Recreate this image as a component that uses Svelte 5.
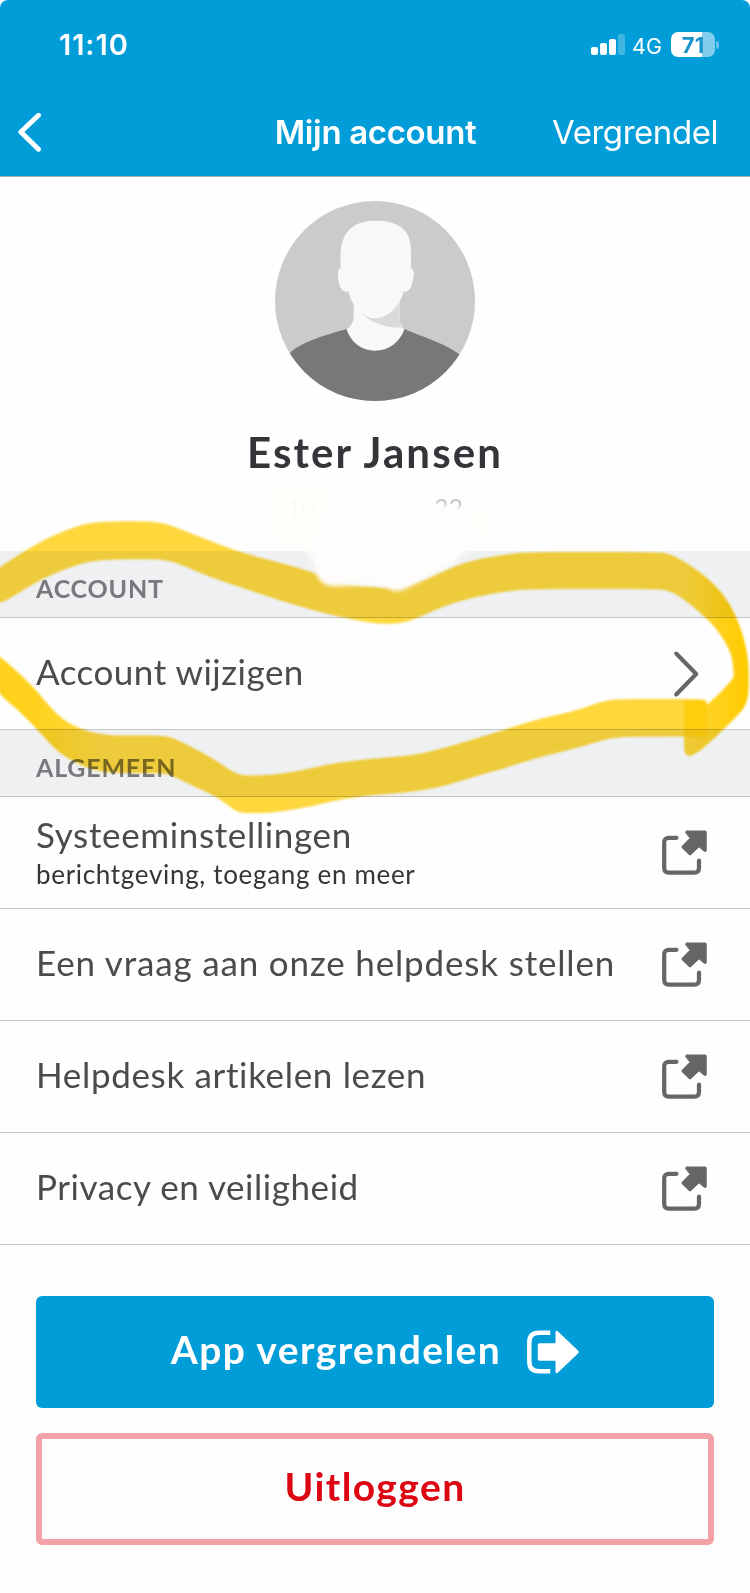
<script lang="ts">
  type Point = [number, number];

  interface Item {
    title: string;
    subtitle?: string;
    tracking: number;
  }

  const general: Item[] = [
    { title: 'Systeeminstellingen', subtitle: 'berichtgeving, toegang en meer', tracking: 0.65 },
    { title: 'Een vraag aan onze helpdesk stellen', tracking: 0.83 },
    { title: 'Helpdesk artikelen lezen', tracking: 0.66 },
    { title: 'Privacy en veiligheid', tracking: 0.55 }
  ];

  const signal = [
    { height: 8, on: true },
    { height: 12, on: true },
    { height: 16, on: true },
    { height: 21, on: false }
  ];

  const battery = 71;

  // Upper marker stroke, from the left edge over the top and round the right
  const upperStroke: Point[] = [
    [-6, 571], [12, 559], [33, 546], [54, 535], [77, 526], [93, 522.5], [110, 521.5], [135, 521],
    [160, 522], [178, 528], [200, 537], [240, 552.5], [283, 563.5], [313, 572], [340, 583],
    [375, 587], [395, 588], [415, 583], [436, 574], [458, 565], [475, 560], [492, 556.5],
    [510, 554], [530, 552], [590, 552], [658, 552], [670, 554], [682, 560], [700, 572],
    [715, 585], [725, 597], [733, 610], [740, 626], [745, 643], [748, 658], [749, 675],
    [748.5, 695], [746, 704], [741, 712], [725, 728], [708, 744], [697, 753], [689, 757],
    [684, 753], [684, 740], [684, 724], [692, 716], [708, 704], [720, 693], [733, 679],
    [734, 674], [732, 657], [728, 647], [722, 637], [715, 627], [706, 618], [690, 604],
    [676, 594], [667, 590.5], [658, 589], [600, 589], [532, 589], [508, 591], [485, 595],
    [463, 600], [442, 607], [424, 615], [408, 622], [392, 624], [375, 623.5], [350, 619],
    [323, 613], [283, 601.5], [240, 587], [207, 576], [180, 564], [163, 559.5], [140, 559],
    [110, 559.5], [93, 561], [80, 564], [60, 571], [40, 580], [20, 592], [-6, 608]
  ];

  const lowerStroke: Point[] = [
    [-6, 652], [4, 660], [20, 674], [37, 691], [50, 707], [60, 717], [72, 725], [87, 731],
    [100, 734], [113, 735.5], [138, 735.5], [160, 735.5], [170, 737], [180, 741], [197, 750],
    [213, 758.5], [227, 768], [236, 773.5], [244, 775.5], [262, 775.5], [280, 774], [304, 770],
    [327, 764.5], [350, 761], [375, 758.5], [405, 756], [425, 753], [458, 744], [492, 733.5],
    [538, 719], [575, 711], [600, 702], [615, 699], [660, 699], [700, 699], [705, 700.5],
    [707, 707], [707, 722], [706, 736], [695, 736.5], [660, 736.5], [615, 737], [597, 742],
    [575, 748.5], [538, 757.5], [505, 768], [475, 776.5], [448, 785], [425, 790], [400, 793],
    [375, 795], [352, 797.5], [333, 801], [313, 806], [293, 809.5], [278, 812], [263, 813],
    [242, 813], [234, 810], [225, 803], [213, 795], [193, 786], [173, 776], [165, 773.5],
    [147, 773], [113, 773], [98, 771], [85, 767], [67, 758], [55, 749], [44, 737], [34, 726],
    [17, 709], [-6, 690]
  ];

  // Closed curve through the middle of every pair of points
  function smooth(points: Point[]) {
    const mid = (a: Point, b: Point) => `${(a[0] + b[0]) / 2} ${(a[1] + b[1]) / 2}`;
    const last = points[points.length - 1];
    let d = `M${mid(last, points[0])}`;
    points.forEach((p, i) => {
      d += `Q${p[0]} ${p[1]} ${mid(p, points[(i + 1) % points.length])}`;
    });
    return d + 'Z';
  }
</script>

<div class="screen">
  <header>
    <div class="status">
      <span class="clock">11:10</span>
      <div class="indicators">
        <div class="signal">
          {#each signal as bar}
            <i class:off={!bar.on} style="height: {bar.height}px"></i>
          {/each}
        </div>
        <span class="network">4G</span>
        <div class="battery">
          <div class="level" style="--level: {battery}%">{battery}</div>
          <div class="tip"></div>
        </div>
      </div>
    </div>
    <nav>
      <button class="back" aria-label="Terug">
        <svg width="28" height="42" viewBox="0 0 28 42">
          <path d="M22.5 4.3 4.8 21l17.7 17.2" />
        </svg>
      </button>
      <h1>Mijn account</h1>
      <button class="lock">Vergrendel</button>
    </nav>
  </header>

  <section class="profile">
    <svg class="avatar" width="200" height="200" viewBox="0 0 200 200">
      <clipPath id="round"><circle cx="100" cy="100" r="100" /></clipPath>
      <g clip-path="url(#round)">
        <rect width="200" height="200" fill="#cbcbcb" />
        <path d="M78.7 98V117Q78 124 71.7 128V160H129V128Q124.7 124 124.7 117V98Z" fill="#f7f8fa" />
        <path d="M83 108Q97 126.7 127 126.7Q124.7 123 124.7 117V98Z" fill="#dadada" />
        <path
          d="M0 165Q10 153 15 152C24 142 50 134 71.5 128C76 142 87 149.7 100 149.7C114 149.7 125 141 129.5 128C148 136 171 143 184 153L200 170V200H0Z"
          fill="#7a7778"
        />
        <path
          d="M100 19.7C80 19.7 65.5 29 65.5 56V67C62 68 63 74 63.5 79C64.5 86 67 92 73.5 90.5C76 104 88 117.3 100 117.3C113 117.3 126 104 128.5 90.5C134 92 136.5 86 138 79C139.5 72 139 68 136 67V50C136 27 122 19.7 100 19.7Z"
          fill="#f7f8fa"
        />
      </g>
    </svg>
    <h2>Ester Jansen</h2>
    <p class="birthday"><span>10</span><span class="year">22</span></p>
  </section>

  <h3>ACCOUNT</h3>
  <div class="row">
    <div class="label"><span class="title account">Account wijzigen</span></div>
    <svg class="chevron" width="26" height="46" viewBox="0 0 26 46">
      <path d="M3.2 2.5 23.2 23 3.2 43.5" />
    </svg>
  </div>

  <h3>ALGEMEEN</h3>
  {#each general as item}
    <div class="row">
      <div class="label" class:double={item.subtitle}>
        <span class="title" style="letter-spacing: {item.tracking}px">{item.title}</span>
        {#if item.subtitle}
          <span class="subtitle">{item.subtitle}</span>
        {/if}
      </div>
      <svg class="external" width="45" height="45" viewBox="0 0 45 45">
        <path
          class="box"
          d="M14.5 7.8H7Q2.2 7.8 2.2 12.5V37.8Q2.2 42.7 7 42.7H32.2Q37 42.7 37 37.8V30.5"
        />
        <path class="arrow" d="M25 2.2H43V20.3L37 15 28 23.5 21.3 17 30 8.3Z" />
      </svg>
    </div>
  {/each}

  <div class="actions">
    <button class="primary">
      <span>App vergrendelen</span>
      <svg width="52" height="44" viewBox="0 0 52 44">
        <path d="M21 2.8H12Q2.3 2.8 2.3 12.5V31.5Q2.3 41.2 12 41.2H21" class="bracket" />
        <path
          d="M28.5 2.5Q28.5 -.5 31 1.5L51 20.5Q52.5 22 51 23.5L31 42.5Q28.5 44.5 28.5 41.5V30.7H12.5Q10.7 30.7 10.7 29V15Q10.7 13.3 12.5 13.3H28.5Z"
          class="solid"
        />
      </svg>
    </button>
    <button class="danger"><span>Uitloggen</span></button>
  </div>

  <!-- Hand-drawn marker and eraser layer -->
  <svg class="marker" width="750" height="1593" viewBox="0 0 750 1593">
    <defs>
      <linearGradient id="ink" gradientUnits="userSpaceOnUse" x1="685" y1="0" x2="740" y2="0">
        <stop offset="0" stop-color="#ffd83c" />
        <stop offset="1" stop-color="#ffcd05" />
      </linearGradient>
      <linearGradient id="ink-left" gradientUnits="userSpaceOnUse" x1="30" y1="0" x2="95" y2="0">
        <stop offset="0" stop-color="#ffd21c" />
        <stop offset="1" stop-color="#ffd83c" />
      </linearGradient>
      <filter id="soft" x="-5%" y="-5%" width="110%" height="110%">
        <feGaussianBlur stdDeviation="0.8" />
      </filter>
    </defs>
    <g filter="url(#soft)">
      <path d={smooth(upperStroke)} fill="url(#ink)" />
      <path d={smooth(lowerStroke)} fill="url(#ink-left)" />
      <path d="M684 726V737H707V707L706 700H684Z" fill="#ffce08" />
    </g>
  </svg>
  <svg class="eraser" width="750" height="1593" viewBox="0 0 750 1593">
    <defs>
      <filter id="fade" x="-10%" y="-10%" width="120%" height="120%">
        <feGaussianBlur stdDeviation="2" />
      </filter>
    </defs>
    <g filter="url(#fade)">
      <path
        d="M270 492Q282 478 320 490L366 490Q375 474 395 478 415 482 430 498L436 505 470 508Q494 510 491 526 488 538 468 551L306 551 282 541Q263 525 270 492Z"
        fill="#fffefb"
        fill-opacity="0.94"
      />
      <path
        d="M330 490 366 490Q375 474 395 478 415 482 428 502L436 506 470 509 480 538 464 553 452 565 425 579 405 589Q396 594 386 587L375 585 340 586Q322 588 317 575L308 548Z"
        fill="#fefdfb"
      />
    </g>
  </svg>
</div>

<style>
  :global(body) {
    margin: 0;
    background: #fff;
  }

  .screen {
    position: relative;
    width: 750px;
    height: 1593px;
    overflow: hidden;
    background: #fefefe;
    font-family: Lato, 'Open Sans', sans-serif;
    font-variant-ligatures: none;
    color: #4a4b4e;
  }

  h1, h2, h3, p {
    margin: 0;
  }

  button {
    padding: 0;
    border: none;
    background: none;
    font-family: inherit;
    color: inherit;
    cursor: pointer;
  }

  svg {
    display: block;
    flex-shrink: 0;
  }

  header {
    height: 176px;
    border-bottom: 1px solid #9fb0b8;
    border-radius: 8px 8px 0 0;
    background: #009dd9;
    font-family: Inter, sans-serif;
    color: #fff;
  }

  .status {
    display: flex;
    justify-content: space-between;
    align-items: center;
    height: 89px;
    padding: 0 31px 0 59px;
  }

  .clock {
    font-size: 29px;
    font-weight: 600;
    letter-spacing: 0.9px;
  }

  .indicators {
    display: flex;
    align-items: center;
  }

  .signal {
    display: flex;
    align-items: flex-end;
    gap: 2px;
    height: 21px;
  }

  .signal i {
    width: 7px;
    border-radius: 2px;
    background: #fff;
  }

  .signal i.off {
    opacity: 0.25;
  }

  .network {
    margin: 2px 9px 0 7px;
    font-size: 21.5px;
    line-height: 26px;
  }

  .battery {
    display: flex;
    align-items: center;
    gap: 1px;
  }

  .level {
    width: 44px;
    height: 25px;
    border-radius: 7px;
    background: linear-gradient(to right, #fff var(--level), #80cdec var(--level));
    font-size: 22px;
    font-weight: 700;
    line-height: 26px;
    text-align: center;
    color: #1a93cb;
  }

  .tip {
    width: 3px;
    height: 8px;
    border-radius: 0 3px 3px 0;
    background: #66c4e8;
  }

  nav {
    display: grid;
    grid-template-columns: 1fr auto 1fr;
    align-items: center;
    height: 86px;
    padding: 0 32px 0 16px;
  }

  nav svg {
    fill: none;
    stroke: #fff;
    stroke-width: 5;
    stroke-linecap: round;
    stroke-linejoin: round;
  }

  .back {
    justify-self: start;
  }

  h1 {
    padding-left: 17px;
    font-size: 33px;
    font-weight: 600;
    letter-spacing: -0.35px;
  }

  .lock {
    justify-self: end;
    font-size: 33px;
    font-weight: 400;
    letter-spacing: -0.45px;
  }

  .profile {
    display: flex;
    flex-direction: column;
    align-items: center;
    height: 350px;
    padding-top: 24px;
  }

  h2 {
    margin-top: 26px;
    font-size: 42px;
    font-weight: 700;
    line-height: 50px;
    letter-spacing: 2.1px;
    color: #333539;
  }

  .birthday {
    display: flex;
    justify-content: space-between;
    width: 176px;
    margin-top: 15px;
    font-size: 25px;
    line-height: 30px;
    color: #bdbdbd;
  }

  .year {
    color: #c8c8c8;
  }

  h3 {
    height: 67px;
    padding: 8px 36px 0;
    box-sizing: border-box;
    border-bottom: 1px solid #c3c4c6;
    background: #eef0f2;
    font-size: 25px;
    font-weight: 700;
    line-height: 58px;
    letter-spacing: 0.8px;
    color: #77797c;
  }

  .row {
    display: flex;
    justify-content: space-between;
    align-items: center;
    height: 111px;
    padding: 0 43px 0 36px;
    border-bottom: 1px solid #c3c4c6;
  }

  .label {
    display: flex;
    flex-direction: column;
    padding-bottom: 6px;
    white-space: nowrap;
  }

  .label.double {
    padding-bottom: 0;
  }

  .title {
    font-size: 35px;
    line-height: 42px;
  }

  .account {
    letter-spacing: 0.5px;
  }

  .subtitle {
    font-size: 26px;
    line-height: 38px;
    letter-spacing: 0.68px;
    color: #333539;
  }

  .chevron {
    margin-right: 8px;
    fill: none;
    stroke: #666;
    stroke-width: 4;
    stroke-linecap: round;
    stroke-linejoin: round;
  }

  .external .box {
    fill: none;
    stroke: #666;
    stroke-width: 4.2;
    stroke-linecap: round;
  }

  .external .arrow {
    fill: #666;
    stroke: #666;
    stroke-width: 3.5;
    stroke-linejoin: round;
  }

  .actions {
    display: flex;
    flex-direction: column;
    gap: 25px;
    padding: 51px 36px 0;
  }

  .actions button {
    display: flex;
    justify-content: center;
    align-items: center;
    width: 678px;
    height: 112px;
    border-radius: 6px;
    box-sizing: border-box;
    font-size: 39px;
    font-weight: 700;
    letter-spacing: 1.4px;
  }

  .actions span {
    padding-bottom: 7px;
  }

  .primary {
    gap: 26px;
    background: #009dd9;
    color: #fff;
  }

  .actions .danger {
    border: 6px solid #f2a1a7;
    color: #dc0512;
  }

  .bracket {
    fill: none;
    stroke: #fff;
    stroke-width: 4.5;
    stroke-linecap: square;
  }

  .solid {
    fill: #fff;
  }

  .marker,
  .eraser {
    position: absolute;
    top: 0;
    left: 0;
    pointer-events: none;
  }

  .marker {
    mix-blend-mode: multiply;
  }
</style>
